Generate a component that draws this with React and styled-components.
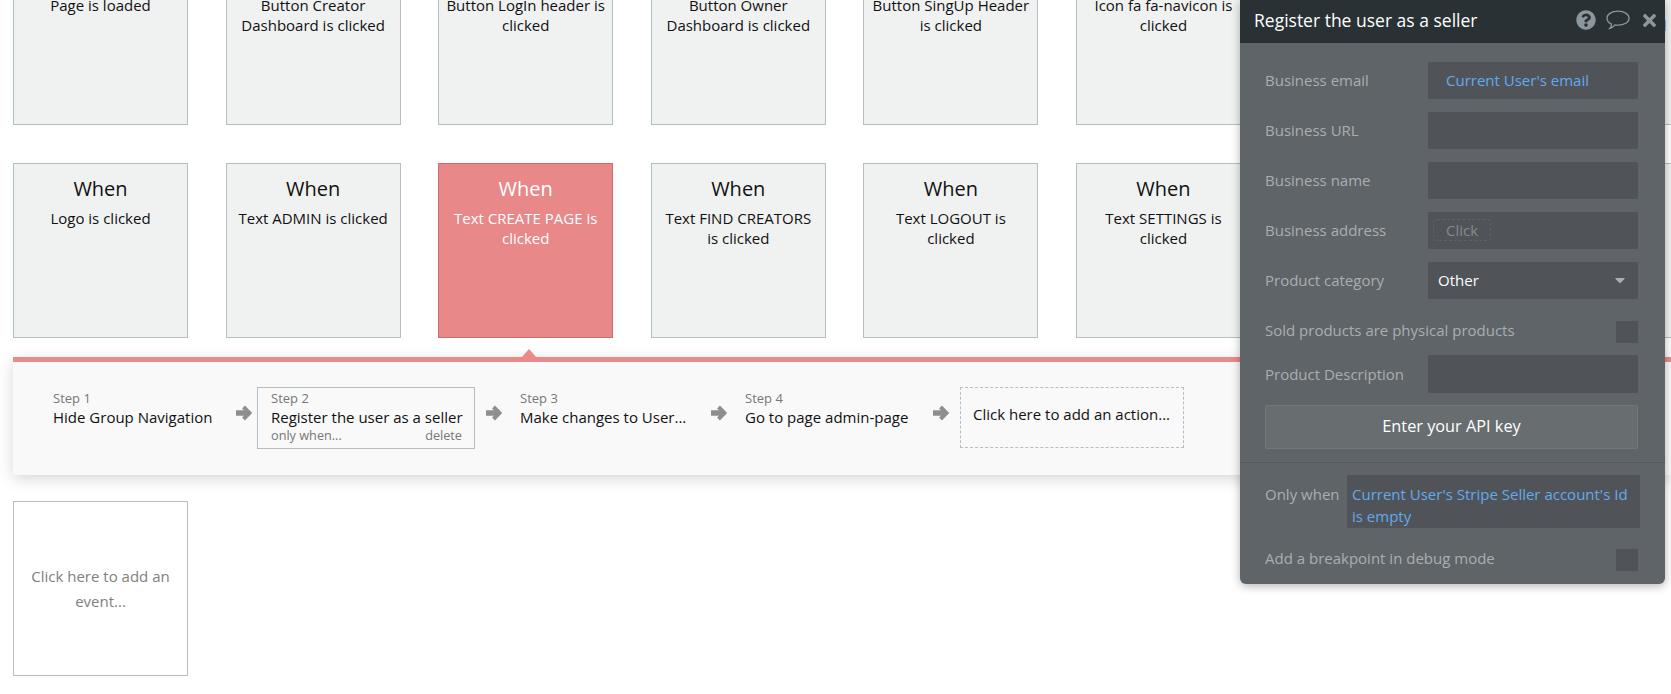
import React from 'react'
import styled, { createGlobalStyle } from 'styled-components'
import { FaQuestionCircle, FaTimes, FaCaretDown } from 'react-icons/fa'

const GlobalStyle = createGlobalStyle`
  html, body {
    margin: 0;
    padding: 0;
    background: #fff;
    overflow: hidden;
    font-family: "Open Sans", sans-serif;
  }
`

const Page = styled.div`
  position: relative;
  width: 1671px;
  height: 694px;
  overflow: hidden;
`

const Canvas = styled.div`
  margin-top: -50px;
  display: flex;
  flex-direction: column;
`

const EventRow = styled.div`
  display: grid;
  grid-template-columns: repeat(8, 175px);
  column-gap: 37.6px;
  padding-left: 13px;
  margin-bottom: 38px;

  &:last-child {
    margin-bottom: 0;
  }
`

const EventCard = styled.div`
  box-sizing: border-box;
  height: 175px;
  padding: 11px 7px 0;
  text-align: center;
  background: ${(p) => (p.$selected ? '#e98889' : '#f0f2f1')};
  border: 1px solid ${(p) => (p.$selected ? '#cf6c6e' : '#b3bfc3')};
  color: ${(p) => (p.$selected ? '#fff' : '#111')};
`

const EventTitle = styled.div`
  font-size: 20px;
  line-height: 28px;
`

const EventText = styled.div`
  margin-top: 5px;
  font-size: 15px;
  line-height: 20px;
`

const AddEventCard = styled.div`
  box-sizing: border-box;
  width: 175px;
  height: 175px;
  display: flex;
  align-items: center;
  justify-content: center;
  padding: 0 14px;
  text-align: center;
  font-size: 15px;
  line-height: 25px;
  color: #808080;
  background: #fff;
  border: 1px solid #b3bfc3;
`

const ActionPanel = styled.div`
  position: relative;
  box-sizing: border-box;
  margin: -19px 0 26px 13px;
  height: 118px;
  background: #f9f9f9;
  border-top: 5px solid #ea8a8a;
  box-shadow: 0 4px 14px rgba(0, 0, 0, 0.16);
  display: flex;
  align-items: flex-start;
  padding: 25px 0 0 40px;

  &::before {
    content: '';
    position: absolute;
    left: 509px;
    top: -13px;
    border-left: 7px solid transparent;
    border-right: 7px solid transparent;
    border-bottom: 8px solid #ea8a8a;
  }
`

const Step = styled.div`
  box-sizing: border-box;
  flex: none;
  width: ${(p) => p.$width}px;
  padding: ${(p) => (p.$active ? '2px 12px 0 13px' : '3px 0 0')};
  height: 62px;
  border: ${(p) => (p.$active ? '1px solid #b3bfc3' : 'none')};
`

const StepLabel = styled.div`
  font-size: 13px;
  line-height: 17px;
  color: #777;
`

const StepName = styled.div`
  font-size: 15px;
  line-height: 20px;
  color: #111;
  white-space: nowrap;
`

const StepFooter = styled.div`
  display: flex;
  justify-content: space-between;
  margin-top: -1px;
  font-size: 12.7px;
  line-height: 18px;
  color: #777;
`

const ArrowSvg = styled.svg`
  flex: none;
  width: 17px;
  height: 16px;
  margin: 18px ${(p) => p.$gap}px 0 ${(p) => p.$lead || 0}px;
  fill: none;
  stroke: #8e8e8e;
`

const AddAction = styled.div`
  box-sizing: border-box;
  flex: none;
  width: 224px;
  height: 61px;
  padding: 12px 12px 0;
  font-size: 15px;
  line-height: 28px;
  color: #111;
  border: 1px dashed #b3bfc3;
  white-space: nowrap;
`

const Palette = styled.div`
  position: absolute;
  left: 1240px;
  top: 0;
  width: 425px;
  height: 584px;
  background: #5f6468;
  border-radius: 0 0 6px 6px;
  box-shadow: 0 2px 10px rgba(0, 0, 0, 0.3);
  font-size: 15px;
  color: #a9aeb1;
`

const PaletteHeader = styled.div`
  height: 43px;
  box-sizing: border-box;
  display: flex;
  align-items: center;
  padding: 0 6px 3px 14px;
  background: #2a3134;
  color: #fff;
  font-size: 17.5px;
`

const PaletteTitle = styled.div`
  flex: 1;
`

const HeaderIcons = styled.div`
  display: flex;
  align-items: center;
  gap: 10px;
  color: #8b979c;
`

const PaletteBody = styled.div`
  padding: 19px 27px 0 25px;
`

const FieldRow = styled.div`
  display: flex;
  align-items: center;
  justify-content: space-between;
  height: ${(p) => p.$height || 37}px;
  margin-bottom: ${(p) => (p.$gap === undefined ? 13 : p.$gap)}px;
`

const FieldLabel = styled.div`
  white-space: nowrap;
  padding-bottom: ${(p) => (p.$nudge === undefined ? 2 : p.$nudge)}px;
`

const FieldInput = styled.div`
  box-sizing: border-box;
  width: 210px;
  height: 100%;
  display: flex;
  align-items: center;
  justify-content: space-between;
  padding: 0 ${(p) => p.$pad || 18}px 2px;
  background: #505458;
  border-radius: 1px;
  color: ${(p) => p.$color || '#64a9ee'};
`

const ClickHint = styled.span`
  margin-left: -13px;
  padding: 0 12px;
  border: 1px dashed #5d6266;
  border-radius: 4px;
  color: #85898c;
`

const Checkbox = styled.div`
  width: 22px;
  height: 22px;
  background: #505458;
`

const ApiButton = styled.div`
  box-sizing: border-box;
  height: 44px;
  display: flex;
  align-items: center;
  justify-content: center;
  background: #686d70;
  border: 1px solid #72777a;
  border-radius: 2px;
  color: #fff;
  font-size: 16.3px;
  padding-bottom: 3px;
`

const Divider = styled.div`
  height: 1px;
  margin: 13px 0 12px;
  background: #54595c;
`

const ConditionRow = styled.div`
  display: flex;
  justify-content: space-between;
  padding: 0 25px;
  margin-bottom: 21px;
`

const ConditionLabel = styled.div`
  padding-top: 8px;
  line-height: 22px;
`

const ConditionValue = styled.div`
  box-sizing: border-box;
  width: 293px;
  height: 53px;
  padding: 8px 5px 0;
  background: #505458;
  color: #64a9ee;
  line-height: 22px;
`

const Footer = styled.div`
  padding: 0 27px 0 25px;
`

const events = [
  'Logo is clicked',
  'Text ADMIN is clicked',
  'Text CREATE PAGE is clicked',
  'Text FIND CREATORS is clicked',
  'Text LOGOUT is clicked',
  'Text SETTINGS is clicked',
  'Text SUPPORT is clicked',
  'Text HELP is clicked',
]

const topEvents = [
  'Page is loaded',
  'Button Creator Dashboard is clicked',
  'Button LogIn header is clicked',
  'Button Owner Dashboard is clicked',
  'Button SingUp Header is clicked',
  'Icon fa fa-navicon is clicked',
  'Group Menu is clicked',
  'Button Notifications Header Logo is clicked',
]

function StepArrow({ gap, lead }) {
  return (
    <ArrowSvg viewBox="0 0 17 16" $gap={gap} $lead={lead}>
      <path d="M1 8h12" strokeWidth="5.5" />
      <path d="M8.500 2l6 6-6 6" strokeWidth="4" />
    </ArrowSvg>
  )
}

function BubbleIcon() {
  return (
    <svg width="24" height="20" viewBox="0 0 24 20" fill="none" stroke="#8b979c" strokeWidth="1.3">
      <path d="M12 1.2c6 0 11 2.8 11 7s-5 7-11 7c-1 0-2-.1-3-.3-1.200 1.400-3 2.800-5 3.400 1-1.100 1.500-2.500 1.500-4.200C3 12.900 1 10.800 1 8.200c0-4.200 5-7 11-7z" />
    </svg>
  )
}

function App() {
  return (
    <Page>
      <GlobalStyle />
      <Canvas>
        <EventRow>
          {topEvents.map((text) => (
            <EventCard key={text}>
              <EventTitle>When</EventTitle>
              <EventText>{text}</EventText>
            </EventCard>
          ))}
        </EventRow>
        <EventRow>
          {events.map((text, i) => (
            <EventCard key={text} $selected={i === 2}>
              <EventTitle>When</EventTitle>
              <EventText>{text}</EventText>
            </EventCard>
          ))}
        </EventRow>
        <ActionPanel>
          <Step $width={182}>
            <StepLabel>Step 1</StepLabel>
            <StepName>Hide Group Navigation</StepName>
          </Step>
          <StepArrow gap={5} />
          <Step $width={218} $active>
            <StepLabel>Step 2</StepLabel>
            <StepName>Register the user as a seller</StepName>
            <StepFooter>
              <span>only when...</span>
              <span>delete</span>
            </StepFooter>
          </Step>
          <StepArrow gap={18} lead={10} />
          <Step $width={190}>
            <StepLabel>Step 3</StepLabel>
            <StepName>Make changes to User...</StepName>
          </Step>
          <StepArrow gap={18} />
          <Step $width={187}>
            <StepLabel>Step 4</StepLabel>
            <StepName>Go to page admin-page</StepName>
          </Step>
          <StepArrow gap={11} />
          <AddAction>Click here to add an action...</AddAction>
        </ActionPanel>
        <EventRow>
          <AddEventCard>Click here to add an event...</AddEventCard>
        </EventRow>
      </Canvas>

      <Palette>
        <PaletteHeader>
          <PaletteTitle>Register the user as a seller</PaletteTitle>
          <HeaderIcons>
            <FaQuestionCircle size={20} />
            <BubbleIcon />
            <FaTimes size={19} />
          </HeaderIcons>
        </PaletteHeader>
        <PaletteBody>
          <FieldRow>
            <FieldLabel>Business email</FieldLabel>
            <FieldInput>Current User's email</FieldInput>
          </FieldRow>
          <FieldRow>
            <FieldLabel>Business URL</FieldLabel>
            <FieldInput />
          </FieldRow>
          <FieldRow>
            <FieldLabel>Business name</FieldLabel>
            <FieldInput />
          </FieldRow>
          <FieldRow>
            <FieldLabel>Business address</FieldLabel>
            <FieldInput>
              <ClickHint>Click</ClickHint>
            </FieldInput>
          </FieldRow>
          <FieldRow $gap={21}>
            <FieldLabel>Product category</FieldLabel>
            <FieldInput $color="#fff" $pad={10}>
              Other
              <FaCaretDown size={16} color="#a9aeb1" />
            </FieldInput>
          </FieldRow>
          <FieldRow $height={23} $gap={12}>
            <FieldLabel $nudge={4}>Sold products are physical products</FieldLabel>
            <Checkbox />
          </FieldRow>
          <FieldRow $height={38} $gap={12}>
            <FieldLabel $nudge={0}>Product Description</FieldLabel>
            <FieldInput />
          </FieldRow>
          <ApiButton>Enter your API key</ApiButton>
        </PaletteBody>
        <Divider />
        <ConditionRow>
          <ConditionLabel>Only when</ConditionLabel>
          <ConditionValue>Current User's Stripe Seller account's Id is empty</ConditionValue>
        </ConditionRow>
        <Footer>
          <FieldRow $height={22} $gap={0}>
            <FieldLabel $nudge={4}>Add a breakpoint in debug mode</FieldLabel>
            <Checkbox />
          </FieldRow>
        </Footer>
      </Palette>
    </Page>
  )
}

export default App
